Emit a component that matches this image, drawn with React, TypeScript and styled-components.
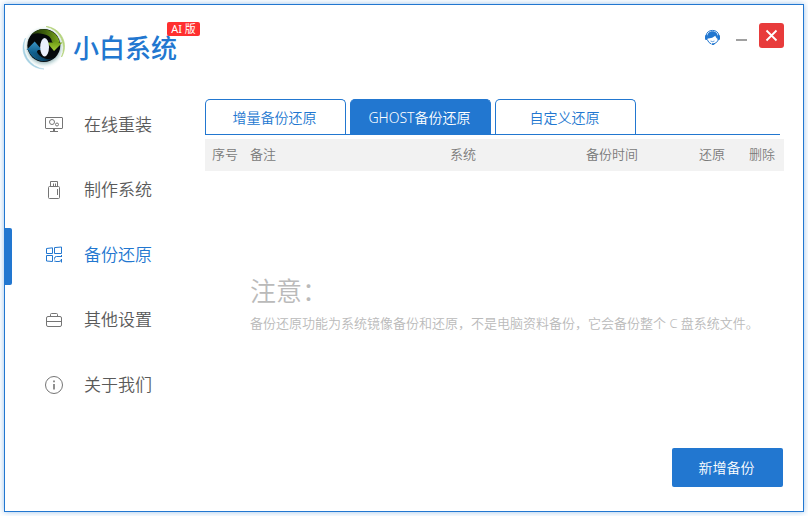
import React from "react";
import styled, { createGlobalStyle } from "styled-components";

const blue = "#2277d0";

const GlobalStyle = createGlobalStyle`
  *, *::before, *::after { box-sizing: border-box; }
  body {
    margin: 0;
    background: #fff;
    font-family: "Noto Sans", "Noto Sans CJK SC", sans-serif;
    font-weight: 350;
  }
  button { font: inherit; cursor: pointer; }
`;

const Desktop = styled.div`
  display: flex;
  min-height: 100vh;
  padding: 4px;
`;

const AppWindow = styled.div`
  flex: 1;
  display: flex;
  flex-direction: column;
  min-width: 0;
  background: #fff;
  border: 1px solid ${blue};
  box-shadow: 0 0 6px rgba(34, 119, 208, 0.45);
`;

const TitleBar = styled.header`
  display: flex;
  justify-content: space-between;
  align-items: flex-start;
  height: 88px;
  padding: 18px 19px 0 17px;
`;

const Brand = styled.div`
  position: relative;
  display: flex;
  align-items: center;
  gap: 5px;
`;

const BrandName = styled.h1`
  margin: 0;
  padding-top: 2px;
  color: ${blue};
  font-size: 26px;
  line-height: 22px;
  font-weight: 500;
`;

const Badge = styled.span`
  position: absolute;
  top: -1px;
  left: 145px;
  width: 33px;
  border-radius: 2px;
  background: #ff2f2f;
  color: #fff;
  font-size: 11px;
  line-height: 14px;
  font-weight: 400;
  text-align: center;
  white-space: nowrap;
`;

const WindowControls = styled.div`
  display: flex;
  align-items: center;
`;

const ControlButton = styled.button<{ $danger?: boolean }>`
  display: grid;
  place-items: center;
  width: ${(p) => (p.$danger ? 25 : 29)}px;
  height: 25px;
  margin-left: ${(p) => (p.$danger ? 3 : 0)}px;
  padding: 0;
  border: 0;
  border-radius: 3px;
  background: ${(p) => (p.$danger ? "#e83b3b" : "transparent")};
`;

const Body = styled.div`
  flex: 1;
  display: flex;
`;

const Sidebar = styled.nav`
  flex: 0 0 200px;
`;

const NavItem = styled.button<{ $active?: boolean }>`
  position: relative;
  display: flex;
  align-items: center;
  gap: 20px;
  width: 100%;
  height: 65px;
  padding: 0 0 2px 39px;
  border: 0;
  background: none;
  color: ${(p) => (p.$active ? blue : "#5a5a5a")};
  font-size: 17px;
  line-height: 24px;

  svg { color: ${(p) => (p.$active ? blue : "#757575")}; }

  &::before {
    content: "";
    display: ${(p) => (p.$active ? "block" : "none")};
    position: absolute;
    left: 0;
    top: 5px;
    width: 7px;
    height: 57px;
    border-radius: 0 2px 2px 0;
    background: ${blue};
  }
`;

const Main = styled.main`
  flex: 1;
  display: flex;
  flex-direction: column;
  min-width: 0;
  padding: 6px 19px 24px 0;
`;

const Tabs = styled.div`
  display: flex;
  gap: 4px;
  margin: 0 4px 4px 0;
  border-bottom: 1px solid ${blue};
`;

const Tab = styled.button<{ $active?: boolean }>`
  width: 141px;
  height: 35px;
  padding: 2px 2px 0 0;
  border: 1px solid ${blue};
  border-bottom: 0;
  border-radius: 5px 5px 0 0;
  background: ${(p) => (p.$active ? blue : "#fff")};
  color: ${(p) => (p.$active ? "#fff" : blue)};
  font-size: 14px;
  line-height: 20px;
`;

const BackupTable = styled.table`
  width: 100%;
  table-layout: fixed;
  border-collapse: collapse;
`;

const HeadCell = styled.th<{ $width?: number }>`
  width: ${(p) => (p.$width ? `${p.$width}px` : "auto")};
  height: 32px;
  padding: 0 0 2px 7px;
  background: #f2f2f2;
  color: #7a7a7a;
  font-size: 13px;
  line-height: 18px;
  font-weight: inherit;
  text-align: left;
`;

const Notice = styled.section`
  flex: 1;
  padding: 102px 0 0 45px;
  color: #bababa;
`;

const NoticeTitle = styled.h2`
  margin: 0 0 4px;
  font-size: 26px;
  line-height: 36px;
  font-weight: inherit;
`;

const NoticeText = styled.p`
  margin: 0;
  font-size: 13px;
  line-height: 20px;
  white-space: nowrap;
`;

const PrimaryButton = styled.button`
  align-self: flex-end;
  width: 111px;
  height: 39px;
  margin-right: 1px;
  padding: 0 2px 2px 0;
  border: 0;
  border-radius: 2px;
  background: ${blue};
  color: #fff;
  font-size: 14px;
`;

const Logo = () => (
  <svg width="46" height="48" viewBox="0 0 46 48" aria-hidden="true">
    <defs>
      <linearGradient id="greenTone" x1="0" y1="0" x2="0" y2="1">
        <stop offset="0" stopColor="#6f9c17" />
        <stop offset="1" stopColor="#a3cc35" />
      </linearGradient>
      <linearGradient id="blueTone" x1="0" y1="0" x2="0" y2="1">
        <stop offset="0" stopColor="#3c95c4" />
        <stop offset="1" stopColor="#0d5d8c" />
      </linearGradient>
      <linearGradient id="greenBody" x1="0" y1="0" x2="1" y2="0">
        <stop offset="0" stopColor="#1e330a" />
        <stop offset="0.5" stopColor="#3f610d" />
        <stop offset="1" stopColor="#7fab20" />
      </linearGradient>
      <linearGradient id="blueBody" x1="0" y1="0" x2="1" y2="0">
        <stop offset="0" stopColor="#14699a" />
        <stop offset="0.6" stopColor="#0b4566" />
        <stop offset="1" stopColor="#041019" />
      </linearGradient>
      <radialGradient id="halo">
        <stop offset="0.68" stopColor="#a3bcc0" />
        <stop offset="0.84" stopColor="#e2eeee" />
        <stop offset="1" stopColor="#fff" stopOpacity="0" />
      </radialGradient>
    </defs>
    <circle cx="22" cy="24" r="21.500" fill="url(#halo)" />
    <path d="M24 3.500A20 20 0 0 1 39.500 34A22 22 0 0 0 24 3.500Z" fill="#b4d37c" stroke="#b4d37c" strokeWidth="0.700" />
    <path d="M22 46A21 21 0 0 1 3.500 15A23 23 0 0 0 22 46Z" fill="#a5d0e2" stroke="#a5d0e2" strokeWidth="0.500" />
    <circle cx="21.800" cy="22.500" r="16.500" fill="#05090b" />
    <path d="M9 12A16.500 16.500 0 0 1 37.500 19H30Q29 12 21 11Q14 9 9 12Z" fill="url(#greenBody)" />
    <path d="M6 26H14Q16 34 23 35.500Q29 37 33 34A16.500 16.500 0 0 1 6 26Z" fill="url(#blueBody)" />
    <path d="M25 19.500H30L33 18.500H36L37 19.500H40.500L32 28Z" fill="url(#greenTone)" />
    <path d="M4.500 27L12.700 18.500L20 27H16L14 30H9L8 27Z" fill="url(#blueTone)" />
    <ellipse cx="22.600" cy="24.200" rx="4.400" ry="9.200" fill="#eaf0fb" />
  </svg>
);

const SupportIcon = () => (
  <svg width="17" height="21" viewBox="0 -4 17 21" aria-hidden="true">
    <path d="M2 6.500A6.700 6.700 0 0 1 15 6.500" fill="none" stroke={blue} strokeWidth="1" />
    <path d="M3.200 9C2.800 4.500 5.200 2.300 8.500 2.300S14.200 4.500 13.800 9L12.600 9.200Q11.800 8.300 11.300 6.800Q8.500 9.300 4.500 9.500Z" fill={blue} />
    <rect x="1" y="6" width="2.800" height="5" rx="1.200" fill={blue} />
    <rect x="13.200" y="6" width="2.800" height="5" rx="1.200" fill={blue} />
    <path d="M3.500 11Q4.500 13.800 7 14.800" fill="none" stroke={blue} strokeWidth="1" />
    <path d="M6.500 12Q8.500 13.300 10.500 12" fill="none" stroke={blue} strokeWidth="0.700" />
    <path d="M14.300 11Q13 14 9.500 15" fill="none" stroke={blue} strokeWidth="1" />
    <rect x="7.500" y="14.200" width="3" height="1.800" rx="0.900" fill={blue} />
  </svg>
);

const MinimizeIcon = () => (
  <svg width="11" height="13" viewBox="0 0 11 13" aria-hidden="true">
    <path d="M0 11H11" stroke="#a0a0a0" strokeWidth="2" />
  </svg>
);

const CloseIcon = () => (
  <svg width="13" height="13" viewBox="0 0 13 13" aria-hidden="true">
    <path d="M1.500 1.500L11.500 11.500M11.500 1.500L1.500 11.500" stroke="#fff" strokeWidth="1.800" />
  </svg>
);

const NavIcon = ({ children }: { children: React.ReactNode }) => (
  <svg width="20" height="20" viewBox="0 0 20 20" fill="none" stroke="currentColor" strokeWidth="1" aria-hidden="true">
    {children}
  </svg>
);

const navItems = [
  {
    label: "在线重装",
    icon: (
      <>
        <rect x="1.500" y="2.500" width="17" height="11" rx="0.500" />
        <circle cx="8" cy="7" r="2.500" />
        <circle cx="13" cy="9.500" r="1.500" />
        <path d="M9.500 14V16.500M10.500 14V16.500M6 16.500H14" />
      </>
    ),
  },
  {
    label: "制作系统",
    icon: (
      <>
        <path d="M6.500 6.500V1.500H13.500V6.500M9.500 3.500V6M11.500 3.500V6" />
        <rect x="4.500" y="6.500" width="11" height="12" rx="1" />
        <path d="M13.500 9V15" />
      </>
    ),
  },
  {
    label: "备份还原",
    icon: (
      <>
        <path d="M2.500 3.500L8.500 2.800V8.500H2.500ZM10.500 2.600L17.500 2V8.500H10.500ZM2.500 10.500H8.500V16.500L2.500 16Z" />
        <path d="M17.500 10V12M17 11.500H12.500Q10.500 11.500 10.500 13.500V14.500M11 17V15.500M11.500 16.500H15Q17.500 16.500 17.500 14V17.500" />
      </>
    ),
  },
  {
    label: "其他设置",
    icon: (
      <>
        <rect x="2.500" y="6.500" width="15" height="10" rx="1.500" />
        <path d="M6.500 6V4.500Q6.500 3.500 7.500 3.500H12.500Q13.500 3.500 13.500 4.500V6M2.500 11.500H17.500" />
      </>
    ),
  },
  {
    label: "关于我们",
    icon: (
      <>
        <circle cx="10" cy="10" r="8.500" />
        <path d="M10 9V14.500M10 5.500V7.200" strokeWidth="1.600" />
      </>
    ),
  },
];

const tabs = ["增量备份还原", "GHOST备份还原", "自定义还原"];

const columns: { label: string; width?: number }[] = [
  { label: "序号", width: 38 },
  { label: "备注" },
  { label: "系统", width: 136 },
  { label: "备份时间", width: 113 },
  { label: "还原", width: 50 },
  { label: "删除", width: 42 },
];

export default function App() {
  const [page, setPage] = React.useState(2);
  const [tab, setTab] = React.useState(1);

  return (
    <>
      <GlobalStyle />
      <Desktop>
        <AppWindow>
          <TitleBar>
            <Brand>
              <Logo />
              <BrandName>小白系统</BrandName>
              <Badge>AI 版</Badge>
            </Brand>
            <WindowControls>
              <ControlButton aria-label="客服"><SupportIcon /></ControlButton>
              <ControlButton aria-label="最小化"><MinimizeIcon /></ControlButton>
              <ControlButton $danger aria-label="关闭"><CloseIcon /></ControlButton>
            </WindowControls>
          </TitleBar>
          <Body>
            <Sidebar>
              {navItems.map((item, i) => (
                <NavItem key={item.label} $active={i === page} onClick={() => setPage(i)}>
                  <NavIcon>{item.icon}</NavIcon>
                  {item.label}
                </NavItem>
              ))}
            </Sidebar>
            <Main>
              <Tabs role="tablist">
                {tabs.map((label, i) => (
                  <Tab key={label} role="tab" aria-selected={i === tab} $active={i === tab} onClick={() => setTab(i)}>
                    {label}
                  </Tab>
                ))}
              </Tabs>
              <BackupTable>
                <thead>
                  <tr>
                    {columns.map((c) => (
                      <HeadCell key={c.label} scope="col" $width={c.width}>{c.label}</HeadCell>
                    ))}
                  </tr>
                </thead>
              </BackupTable>
              <Notice>
                <NoticeTitle>注意：</NoticeTitle>
                <NoticeText>备份还原功能为系统镜像备份和还原，不是电脑资料备份，它会备份整个 C 盘系统文件。</NoticeText>
              </Notice>
              <PrimaryButton>新增备份</PrimaryButton>
            </Main>
          </Body>
        </AppWindow>
      </Desktop>
    </>
  );
}
